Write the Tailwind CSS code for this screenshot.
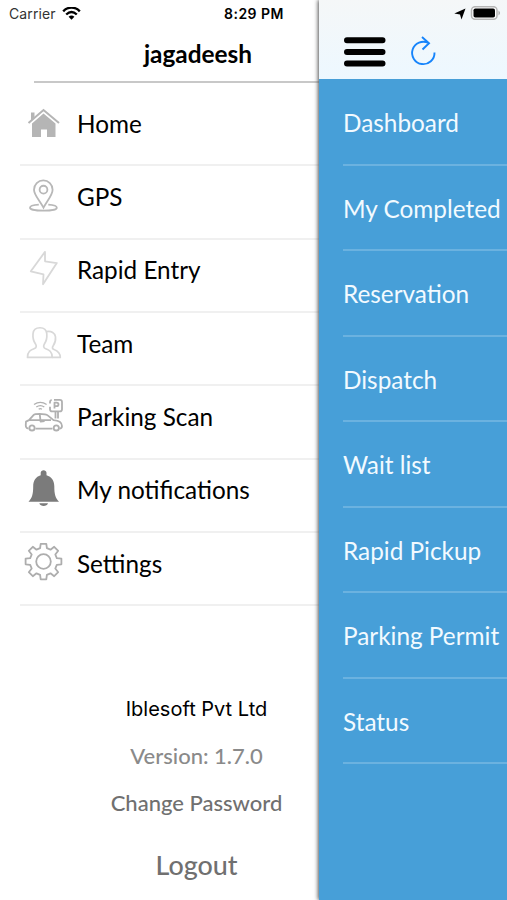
<!DOCTYPE html>
<html lang="en">
<head>
<meta charset="utf-8">
<title>Menu</title>
<script src="https://cdn.jsdelivr.net/npm/@tailwindcss/browser@4"></script>
</head>
<body class="bg-white">
<div class="flex h-[900px] w-[507px] overflow-hidden bg-white font-['Lato',sans-serif] text-black">
  <aside class="flex w-[319px] shrink-0 flex-col">
    <div class="flex h-[28px] items-center pl-[9px] font-['Inter',sans-serif]">
      <span class="w-[48px] text-[14px] leading-[18px] tracking-[0.100px] text-[#333] pb-px">Carrier</span>
      <svg class="ml-[5px] h-[14px] w-[19px]" viewBox="0 0 19 14" fill="none" stroke="#000" stroke-width="2.4"><path d="M1.200 4.300C6-.6 13-.6 17.800 4.300M4.200 7.500C7.500 4.400 11.500 4.400 14.800 7.500"/><path d="M6.600 9.800C8.400 8.200 10.600 8.200 12.400 9.800L9.500 12.800Z" fill="#000" stroke="none"/></svg>
      <span class="ml-[143px] text-[14px] leading-[18px] tracking-[0.480px] whitespace-nowrap font-semibold">8:29 PM</span>
    </div>
    <h1 class="ml-[34px] h-[55px] border-b-2 border-[#c8c8c8] pt-[11px] pl-[43px] text-center text-[24.400px] leading-[30px] font-bold">jagadeesh</h1>
    <nav class="mt-[10px] ml-[20px] flex flex-col text-[24.300px]">
      <a class="flex h-[73.350px] items-start border-b-2 border-[#f0f0f0] pt-[11.500px]"><svg class="h-[38px] w-[48px] overflow-visible" viewBox="20 104.500 48 38"><path d="M31 112h3.500v5L31 120zM32 123l11.500-10L55.500 123v13.500H47V129h-6v7.500h-9z" fill="#b5b5b5"/><path d="M28.500 122.500 43.500 109.500l15.500 13" fill="none" stroke="#b5b5b5" stroke-width="2"/></svg><span class="ml-[9px] leading-[37px]">Home</span></a>
      <a class="flex h-[73.350px] items-start border-b-2 border-[#f0f0f0] pt-[11.500px]"><svg class="h-[38px] w-[48px] overflow-visible" viewBox="20 177.850 48 38" fill="none" stroke="#b8b8b8" stroke-width="1.800"><path d="M43.500 207.500C40 200.500 34 195 34 189.500a9.300 9.300 0 0 1 18.600 0C52.600 195 47 200.500 43.500 207.500Z"/><circle cx="43.500" cy="189.500" r="3.900"/><path d="M38.800 204.500C33 204.800 30 206 30 207.500c0 1.800 6 3 13.500 3s13.300-1.200 13.300-3c0-1.500-3.500-2.700-8.500-3"/></svg><span class="ml-[9px] leading-[37px]">GPS</span></a>
      <a class="flex h-[73.350px] items-start border-b-2 border-[#f0f0f0] pt-[11.500px]"><svg class="h-[38px] w-[48px] overflow-visible" viewBox="20 251.200 48 38" fill="none" stroke="#d8d8d8" stroke-width="1.800" stroke-linejoin="round"><path d="M45 252 30.800 271.500 43.500 274.500 43 284.500 56.800 263.300 45 261.500Z"/></svg><span class="ml-[9px] leading-[37px]">Rapid Entry</span></a>
      <a class="flex h-[73.350px] items-start border-b-2 border-[#f0f0f0] pt-[11.500px]"><svg class="h-[38px] w-[48px] overflow-visible" viewBox="20 324.550 48 38" fill="none" stroke="#d8d8d8" stroke-width="1.700" stroke-linejoin="round"><path d="M27.500 357h24.700c0-6-3-7.500-7-9-1.700-.7-2-2.500-.8-4.400 2.700-4 2.700-6.500 2.400-10.300-.4-4-3-6-6.800-6s-6.700 2-7 6c-.3 4-.2 6.500 2.500 10.300 1.300 1.900.8 3.700-1 4.400-4 1.500-7 3-7 9Z"/><path d="M46.500 331.200c5-.8 8.500 1.300 9 5.300.3 3.500-.3 6-2.300 8.800-1.200 1.700-1 3 .8 3.700 4 1.500 6.300 3.500 6.300 8h-8"/></svg><span class="ml-[9px] leading-[37px]">Team</span></a>
      <a class="flex h-[73.350px] items-start border-b-2 border-[#f0f0f0] pt-[11.500px]"><svg class="h-[38px] w-[48px] overflow-visible" viewBox="20 397.900 48 38" fill="none" stroke="#b0b0b0" stroke-width="1.800" stroke-linejoin="round"><path d="M28.500 428.500C25.500 428.500 25.500 426 26 421.500l3-1.500 4.500-5c1-1 2-1.200 6-1.200s6.500.2 8.500 1.700l5.500 4.500c6 .5 8.500 2 8.500 6 0 1.700-.5 2.500-2.500 2.500M35.500 428.500h17M29 420h22M39.800 414.500l.8 7 4-.5"/><circle cx="32" cy="427.800" r="2.600"/><circle cx="56.300" cy="427.800" r="2.600"/><path d="M54 399.700h5.800q2.200 0 2.200 2.200v7.200q0 2.200-2.200 2.200h-7.600q-2.200 0-2.200-2.200v-2.500M50 403.500v-1.500q0-2 1.700-2.300M55.500 411.500v7M58 411.500v7M54.500 408.500v-6h2q2 .2 2 1.800t-2 1.800h-2"/><path d="M34 404.500q6.300-4.600 12.600 0M36.300 407q4-3 8 0M38.700 409.200q1.600-1.200 3.200 0" stroke-width="1.300"/></svg><span class="ml-[9px] leading-[37px]">Parking Scan</span></a>
      <a class="flex h-[73.350px] items-start border-b-2 border-[#f0f0f0] pt-[11.500px]"><svg class="h-[38px] w-[48px] overflow-visible" viewBox="20 471.250 48 38" fill="#7b7b7b"><path d="M40.700 475.500v-2.500c0-3.500 5.800-3.500 5.800 0v2.500c5.200 1.500 7.800 5.500 7.800 11 0 8 1 11.500 4.700 15.500H28.500c3.700-4 4.700-7.500 4.700-15.500 0-5.500 2.500-9.500 7.500-11ZM39.300 503.500h8.700c-1 3.700-7.700 3.700-8.700 0Z"/></svg><span class="ml-[9px] leading-[37px]">My notifications</span></a>
      <a class="flex h-[73.350px] items-start border-b-2 border-[#f0f0f0] pt-[11.500px]"><svg class="h-[38px] w-[48px] overflow-visible" viewBox="-23.500 -16.500 48 38" fill="none" stroke="#adadad" stroke-width="1.800" stroke-linejoin="round"><path d="M-3.400-13.300-2.800-17.700H2.800L3.400-13.300 7-11.800 10.700-14.700 14.700-10.700 11.800-7 13.300-3.400 17.900-2.800V2.800L13.300 3.400 11.800 7 14.700 10.700 10.700 14.700 7 11.800 3.400 13.300 2.800 17.900H-2.800L-3.400 13.300-7 11.800-10.700 14.700-14.700 10.700-11.800 7-13.300 3.400-17.900 2.800V-2.800L-13.300-3.400-11.800-7-14.700-10.700-10.700-14.700-7-11.800Z"/><circle r="7.300"/></svg><span class="ml-[9px] leading-[37px]">Settings</span></a>
    </nav>
    <footer class="mt-[88px] flex flex-col items-center pl-[74px] text-[22px] font-medium text-[#707070]">
      <p class="font-['Inter',sans-serif] text-[20px] leading-[30px] font-normal text-black">Iblesoft Pvt Ltd</p>
      <p class="mt-[17px] leading-[30px] text-[#8a8a8a]">Version: 1.7.0</p>
      <p class="mt-[17px] leading-[30px]">Change Password</p>
      <p class="mt-[29px] text-[26.900px] leading-[36px]">Logout</p>
    </footer>
  </aside>
  <main class="flex w-[188px] shrink-0 flex-col bg-[#479fd8] shadow-[-1px_0_4px_#555]">
    <header class="h-[79px] bg-linear-to-b from-[#f5f7f8] to-[#edf8ff]">
      <div class="flex h-[28px] items-center pl-[135px]">
        <svg class="h-[16px] w-[48px]" viewBox="454 6 48 16"><path d="M465.500 8.500 461.500 19.500 460 14.500 454.300 13.500Z"/><rect x="471.500" y="6.700" width="25.500" height="12.500" rx="3.500" fill="#fff" stroke="#b5b5b5" stroke-width="1.500"/><rect x="473.500" y="8.500" width="21.500" height="9" rx="1.800"/><path d="M498.500 10.500q3 2.500 0 5Z" fill="#aaa"/></svg>
      </div>
      <div class="flex pt-[8px] pl-[25px]">
        <svg class="h-[32px] w-[42px]" viewBox="344 36 42 32" stroke="#000" stroke-width="6" stroke-linecap="round"><path d="M347 40.300h35.500M347 52h35.500M347 63.500h35.500"/></svg>
        <svg class="ml-[24px] h-[32px] w-[28px]" viewBox="410 36 28 32" fill="none" stroke="#1684fb" stroke-width="1.900"><path d="M434.500 52.500A11.200 11.200 0 1 1 428.500 43M422 37l7 6.200-6.500 6.300"/></svg>
      </div>
    </header>
    <nav class="ml-[24px] flex flex-col text-[24.350px] whitespace-nowrap text-[#f2faff]">
      <a class="h-[86.500px] border-b-2 border-[#6bb2e0] pt-[26px] leading-[36px]">Dashboard</a>
      <a class="h-[85.500px] border-b-2 border-[#6bb2e0] pt-[25px] leading-[36px]">My Completed</a>
      <a class="h-[85.500px] border-b-2 border-[#6bb2e0] pt-[25px] leading-[36px]">Reservation</a>
      <a class="h-[85.500px] border-b-2 border-[#6bb2e0] pt-[25px] leading-[36px]">Dispatch</a>
      <a class="h-[85.500px] border-b-2 border-[#6bb2e0] pt-[25px] leading-[36px]">Wait list</a>
      <a class="h-[85.500px] border-b-2 border-[#6bb2e0] pt-[25px] leading-[36px]">Rapid Pickup</a>
      <a class="h-[85.500px] border-b-2 border-[#6bb2e0] pt-[25px] leading-[36px]">Parking Permit</a>
      <a class="h-[85.500px] border-b-2 border-[#6bb2e0] pt-[25px] leading-[36px]">Status</a>
    </nav>
  </main>
</div>
</body>
</html>
